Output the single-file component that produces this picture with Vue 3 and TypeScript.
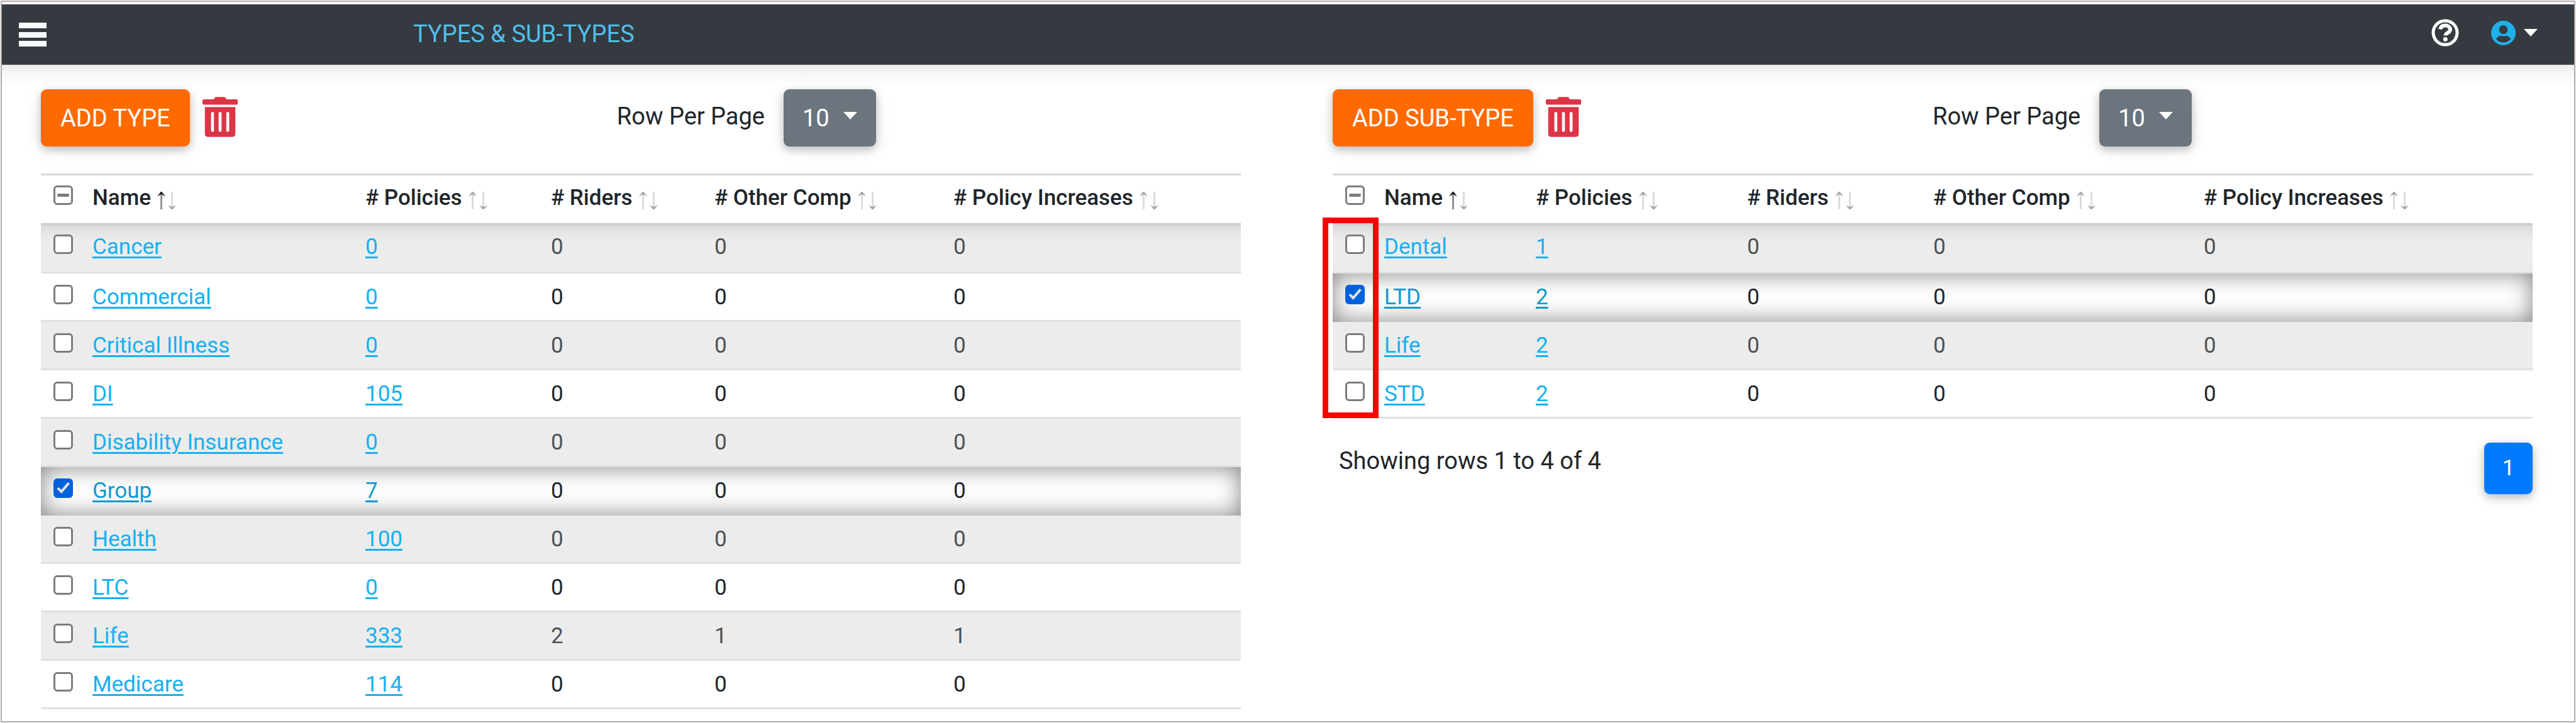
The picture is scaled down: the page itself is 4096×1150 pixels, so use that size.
<script setup lang="ts">
import { reactive } from 'vue'

interface Row {
  name: string
  policies: number
  riders: number
  other: number
  increases: number
  selected: boolean
}

interface Panel {
  id: string
  addLabel: string
  wide: boolean
  footer: string
  highlight: boolean
  rows: Row[]
}

const row = (name: string, policies: number, riders = 0, other = 0, increases = 0, selected = false): Row => ({
  name,
  policies,
  riders,
  other,
  increases,
  selected,
})

const columns = ['Name', '# Policies', '# Riders', '# Other Comp', '# Policy Increases']

const panels = reactive<Panel[]>([
  {
    id: 'types',
    addLabel: 'ADD TYPE',
    wide: false,
    footer: '',
    highlight: false,
    rows: [
      row('Cancer', 0),
      row('Commercial', 0),
      row('Critical Illness', 0),
      row('DI', 105),
      row('Disability Insurance', 0),
      row('Group', 7, 0, 0, 0, true),
      row('Health', 100),
      row('LTC', 0),
      row('Life', 333, 2, 1, 1),
      row('Medicare', 114),
    ],
  },
  {
    id: 'subtypes',
    addLabel: 'ADD SUB-TYPE',
    wide: true,
    footer: 'Showing rows 1 to 4 of 4',
    highlight: true,
    rows: [
      row('Dental', 1),
      row('LTD', 2, 0, 0, 0, true),
      row('Life', 2),
      row('STD', 2),
    ],
  },
])
</script>

<template>
  <div class="page">
    <header class="navbar">
      <button class="icon-button" type="button" aria-label="Menu">
        <svg class="menu-icon" viewBox="0 0 44 38" aria-hidden="true">
          <path d="M0 0h44v9H0zM0 15h44v9H0zM0 29h44v9H0z" fill="#f8f9fa" />
        </svg>
      </button>
      <h1 class="title">TYPES &amp; SUB-TYPES</h1>
      <div class="nav-actions">
        <button class="icon-button" type="button" aria-label="Help">
          <svg class="help-icon" viewBox="0 0 44 44" aria-hidden="true">
            <circle cx="22" cy="22" r="19" fill="none" stroke="#fff" stroke-width="5" />
            <path d="M14 16.5c1-4.200 4-6 8-6 4.500 0 8 2.500 8 6.500 0 5.500-7.500 5-7.500 9.500" fill="none" stroke="#fff" stroke-width="6" />
            <circle cx="22.300" cy="32.500" r="3.500" fill="#fff" />
          </svg>
        </button>
        <button class="icon-button account" type="button" aria-label="Account">
          <svg class="user-icon" viewBox="0 0 40 40" aria-hidden="true">
            <circle cx="20" cy="20" r="20" fill="#1fb0ea" />
            <circle cx="20" cy="14.500" r="7" fill="#343a40" />
            <path d="M8 30c2-4 5-5.500 8-5.500 1.500 0 2.500 1 4 1s2.500-1 4-1c3 0 6 1.500 8 5.500-3 3.500-7.500 5.500-12 5.500S11 33.500 8 30z" fill="#343a40" />
          </svg>
          <svg class="caret" viewBox="0 0 22 12" aria-hidden="true"><path d="M0 0h22L11 12z" fill="#fff" /></svg>
        </button>
      </div>
    </header>

    <main class="content">
      <section v-for="panel in panels" :key="panel.id" class="panel">
        <div class="toolbar">
          <div class="actions" :class="{ wide: panel.wide }">
            <button class="add" type="button">{{ panel.addLabel }}</button>
            <button class="icon-button" type="button" aria-label="Delete selected">
              <svg class="trash-icon" viewBox="0 0 60 68" aria-hidden="true">
                <path d="M19 4l2-3q1-1 2-1h14q1 0 2 1l2 3h17q2 0 2 2v5q0 2-2 2H2q-2 0-2-2V6q0-2 2-2z" fill="#dc3545" />
                <path d="M4 17h52v46q0 5-5 5H9q-5 0-5-5z" fill="#dc3545" />
                <path d="M17 28v29M30 28v29M43 28v29" stroke="#fff" stroke-width="5" stroke-linecap="round" />
              </svg>
            </button>
          </div>
          <label class="per-page-label" :for="panel.id + '-size'">Row Per Page</label>
          <div class="select-wrap">
            <select :id="panel.id + '-size'" class="per-page">
              <option>10</option>
            </select>
            <svg class="caret select-caret" viewBox="0 0 22 12" aria-hidden="true"><path d="M0 0h22L11 12z" fill="#fff" /></svg>
          </div>
        </div>

        <div class="table-wrap">
          <table class="grid" :class="panel.id">
            <thead>
              <tr>
                <th class="check">
                  <input class="box" type="checkbox" aria-label="Select all" :indeterminate.prop="true" />
                </th>
                <th v-for="(column, i) in columns" :key="column" scope="col">
                  {{ column }}<svg class="sort" :class="{ ascending: i === 0 }" viewBox="0 0 30 28" aria-hidden="true">
                    <path class="up-shaft" d="M6.500 3v25" />
                    <path class="up-head" d="M0 7.500L5.500 0h2L13 7.500 6.500 4z" />
                    <path class="down-shaft" d="M23.500 0v24" />
                    <path class="down-head" d="M17 21.500L22.500 28h2L30 21.500 23.500 24z" />
                  </svg>
                </th>
              </tr>
            </thead>
            <tbody>
              <tr v-for="item in panel.rows" :key="item.name" :class="{ selected: item.selected }">
                <td class="check">
                  <input v-model="item.selected" class="box" type="checkbox" :aria-label="'Select ' + item.name" />
                </td>
                <td><a href="#">{{ item.name }}</a></td>
                <td><a href="#">{{ item.policies }}</a></td>
                <td>{{ item.riders }}</td>
                <td>{{ item.other }}</td>
                <td>{{ item.increases }}</td>
              </tr>
            </tbody>
          </table>
          <div v-if="panel.highlight" class="highlight"></div>
        </div>

        <div v-if="panel.footer" class="footer">
          <p class="summary">{{ panel.footer }}</p>
          <button class="page-number" type="button">1</button>
        </div>
      </section>
    </main>
  </div>
</template>

<style>
body {
  background: #fff;
}
</style>

<style scoped>
.page {
  box-sizing: border-box;
  min-height: calc(100vh - 2px);
  margin: 1px;
  padding-top: 4px;
  border: 2px solid #b0abac;
  background: #fff;
  color: #212529;
  font-family: Roboto, "Liberation Sans", sans-serif;
  font-size: 38px;
  line-height: 46px;
}

button,
select {
  margin: 0;
  border: 0;
  font: inherit;
  cursor: pointer;
}

svg {
  display: block;
}

.icon-button {
  display: flex;
  align-items: center;
  padding: 0;
  background: none;
}

.navbar {
  box-sizing: border-box;
  display: flex;
  align-items: center;
  height: 96px;
  padding: 0 58px 0 27px;
  background: #343a40;
}

.menu-icon {
  width: 44px;
  height: 38px;
}

.title {
  margin: 0 0 2px 583px;
  color: #52bfe9;
  font-size: 38px;
  font-weight: 400;
}

.nav-actions {
  display: flex;
  gap: 51px;
  margin: 0 0 6px auto;
}

.help-icon {
  width: 44px;
  height: 44px;
}

.user-icon {
  width: 39px;
  height: 39px;
}

.account {
  gap: 13px;
}

.caret {
  width: 22px;
  height: 12px;
}

.content {
  display: grid;
  grid-template-columns: 1fr 1fr;
  align-items: start;
  gap: 146px;
  padding: 39px 66px 0 62px;
  background: linear-gradient(#e9e9e9, #f6f6f6 12px, #fff 34px) no-repeat;
}

.toolbar {
  display: flex;
  align-items: center;
  margin-bottom: 43px;
}

.actions {
  display: flex;
  align-items: center;
  gap: 20px;
  width: 48%;
}

.actions.wide {
  width: 50%;
}

.add {
  height: 91px;
  padding: 0 31px;
  border-radius: 9px;
  background: #ff6a00;
  color: #fff;
  box-shadow: 0 5px 13px rgba(0, 0, 0, 0.2), 0 5px 26px rgba(0, 0, 0, 0.1);
}

.trash-icon {
  width: 56px;
  height: 64px;
  margin-bottom: 3px;
}

.per-page-label {
  margin: 0 30px 5px 0;
}

.select-wrap {
  position: relative;
}

.per-page {
  display: block;
  width: 147px;
  height: 91px;
  padding: 0 0 0 30px;
  border-radius: 9px;
  background: #6c757d;
  color: #fff;
  appearance: none;
  box-shadow: 0 5px 13px rgba(0, 0, 0, 0.2), 0 5px 26px rgba(0, 0, 0, 0.1);
}

.select-caret {
  position: absolute;
  top: 36px;
  right: 30px;
  pointer-events: none;
}

.table-wrap {
  position: relative;
}

.grid {
  width: 100%;
  border-collapse: separate;
  border-spacing: 0;
  border-top: 3px solid #d3d6db;
  table-layout: fixed;
  font-size: 35px;
  line-height: 42px;
}

th {
  padding: 15px 0 19px 18px;
  font-weight: 500;
  text-align: left;
  white-space: nowrap;
}

td {
  padding: 17px 0 15px 18px;
  border-bottom: 3px solid #dfe0e1;
  vertical-align: top;
}

th.check {
  width: 44px;
  padding-top: 16px;
  padding-left: 20px;
  vertical-align: top;
}

td.check {
  padding-top: 18px;
  padding-left: 20px;
}

.types th:nth-child(2) {
  width: 416px;
}

.types th:nth-child(3) {
  width: 277px;
}

.types th:nth-child(4) {
  width: 242px;
}

.types th:nth-child(5) {
  width: 362px;
}

.subtypes th:nth-child(2) {
  width: 223px;
}

.subtypes th:nth-child(3) {
  width: 318px;
}

.subtypes th:nth-child(4) {
  width: 278px;
}

.subtypes th:nth-child(5) {
  width: 412px;
}

tbody tr:nth-child(odd) {
  background: #ececec;
  color: #4d5154;
}

tbody tr:first-child {
  background: linear-gradient(#c4c4c4, #dcdcdc 5px, #e4e4e4 14px, #ececec 28px);
}

tbody tr:first-child td {
  padding-bottom: 18px;
}

tbody tr.selected {
  color: #212529;
  box-shadow: inset 0 0 36px rgba(0, 0, 0, 0.5);
}

tbody tr.selected td {
  border-bottom-color: transparent;
}

a {
  color: #16b0f2;
  text-decoration: underline;
  text-decoration-thickness: 3px;
  text-underline-offset: 4px;
}

.selected a {
  color: #1299cd;
}

.box {
  box-sizing: border-box;
  display: block;
  width: 31px;
  height: 31px;
  margin: 0;
  border: 3px solid #7d7d7d;
  border-radius: 6px;
  background: #fff;
  appearance: none;
}

.box:checked {
  border-color: #0062dc;
  background: #0062dc;
}

.box:checked::after {
  content: "";
  display: block;
  width: 25px;
  height: 25px;
  background: #e2e2e2;
  clip-path: polygon(10% 54%, 21% 44%, 38% 60%, 79% 12%, 92% 22%, 39% 84%);
}

.box:indeterminate::after {
  content: "";
  display: block;
  width: 19px;
  height: 5px;
  margin: 10px 3px;
  border-radius: 2px;
  background: #7d7d7d;
}

.sort {
  display: inline-block;
  width: 30px;
  height: 28px;
  margin-left: 10px;
  vertical-align: -7px;
}

.sort path {
  fill: #a8a8a8;
}

.sort .up-shaft,
.sort .down-shaft {
  fill: none;
  stroke: #dcdcdc;
  stroke-width: 3px;
}

.sort.ascending .up-head {
  fill: #212529;
}

.sort.ascending .up-shaft {
  stroke: #8f9396;
}

.highlight {
  position: absolute;
  top: 70px;
  left: -16px;
  box-sizing: border-box;
  width: 89px;
  height: 319px;
  border: 9px solid #f00;
  pointer-events: none;
}

.footer {
  display: flex;
  align-items: flex-start;
  justify-content: space-between;
  margin-top: 38px;
}

.summary {
  margin: 6px 0 0 10px;
}

.page-number {
  width: 77px;
  height: 82px;
  padding: 0;
  border-radius: 9px;
  background: #007bff;
  color: #fff;
  font-size: 35px;
  box-shadow: 0 5px 13px rgba(0, 0, 0, 0.2), 0 5px 26px rgba(0, 0, 0, 0.1);
}
</style>
